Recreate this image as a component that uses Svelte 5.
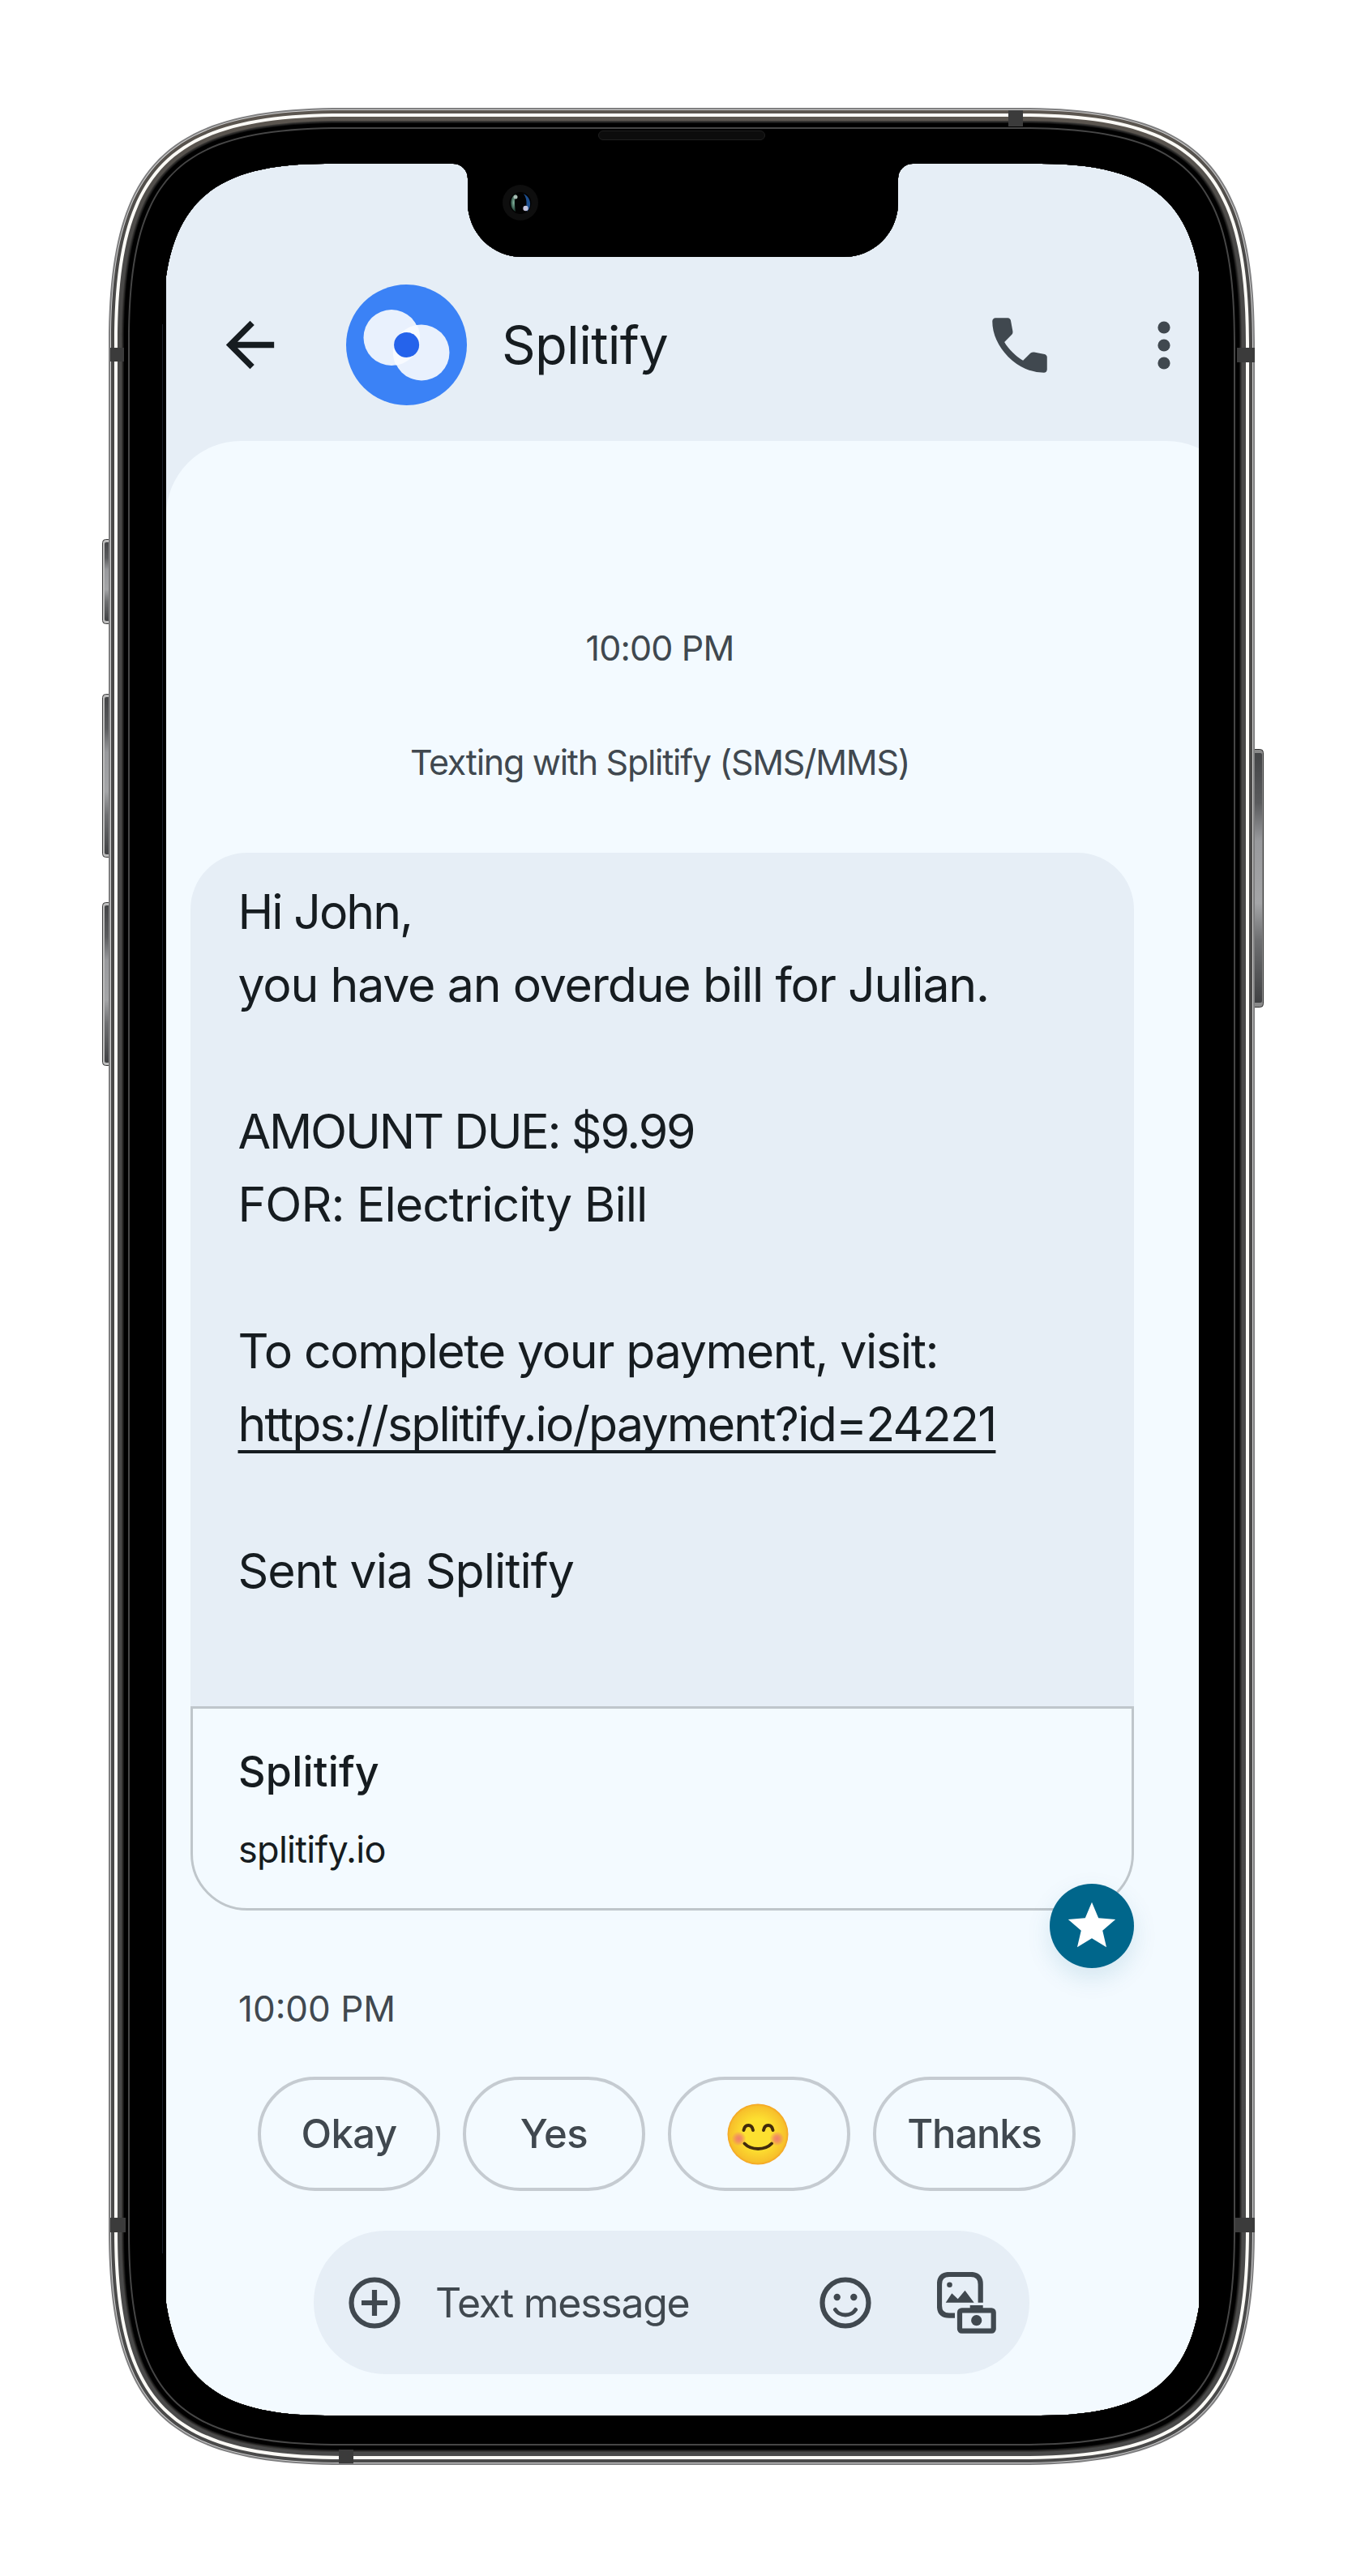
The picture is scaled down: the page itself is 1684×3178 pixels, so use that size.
<script>
  // Message lines; track is the letter spacing in px.
  const body = [
    { text: 'Hi John,', track: -2 },
    { text: 'you have an overdue bill for Julian.', track: -1.2 },
    { text: '', track: 0 },
    { text: 'AMOUNT DUE: $9.99', track: -2.2 },
    { text: 'FOR: Electricity Bill', track: -1 },
    { text: '', track: 0 },
    { text: 'To complete your payment, visit:', track: -1.35 },
    { text: 'https://splitify.io/payment?id=24221', track: -1.8, link: true },
    { text: '', track: 0 },
    { text: 'Sent via Splitify', track: -1 }
  ];

  // Outline of the body, inset by d, with continuous (squircle-like) corners.
  function ring(d) {
    const l = 134 + d, t = 133 + d, r = 1548 - d, b = 3041 - d;
    const e = 290 - d, k = 70 - 0.448 * d;
    return `M${l + e} ${t}H${r - e}C${r - k} ${t} ${r} ${t + k} ${r} ${t + e}V${b - e}` +
      `C${r} ${b - k} ${r - k} ${b} ${r - e} ${b}H${l + e}C${l + k} ${b} ${l} ${b - k} ${l} ${b - e}` +
      `V${t + e}C${l} ${t + k} ${l + k} ${t} ${l + e} ${t}Z`;
  }

  // Opening for the display: squircle corners, sides cropped by the bezel, notch cut in.
  const display =
    'M401 202H559A18 18 0 0 1 577 220V250A67 67 0 0 0 644 317H1041A67 67 0 0 0 1108 250V220A18 18 0 0 1 1126 202' +
    'H1284C1430 202 1484 256 1484 402V2780C1484 2926 1430 2980 1284 2980H401C255 2980 201 2926 201 2780V402C201 256 255 202 401 202Z';

  const hole = ' ' + display;
  const layers = [
    [0, '#7f7f80'], [2, '#d0d0d0'], [3, 'url(#metal)'], [7, '#fbfaf6'], [11, 'url(#metal)'],
    [16, '#3a3937'], [17, '#282726'], [18, '#141414'], [19, '#000'], [24, '#464646'], [26, '#000']
  ];
</script>

<div class="stage">
  <div class="screen">
    <header>
      <svg class="back" viewBox="0 0 24 24"><path d="M20 11H7.83l5.59-5.59L12 4l-8 8 8 8 1.41-1.41L7.83 13H20z" /></svg>
      <svg class="avatar" viewBox="0 0 149 149">
        <circle cx="74.5" cy="74.5" r="74.5" fill="#3b82f6" />
        <circle cx="56" cy="65.5" r="34.5" fill="#e9f1fd" />
        <circle cx="93" cy="84" r="34.5" fill="#e9f1fd" />
        <path d="M61.5 99.5A34.5 34.5 0 0 1 87.5 50A34.5 34.5 0 0 1 61.5 99.5Z" fill="#f8fbff" />
        <circle cx="74.6" cy="74.5" r="15.5" fill="#2563eb" />
      </svg>
      <h1>Splitify</h1>
      <svg class="call" viewBox="0 0 24 24"><path d="M19.95 21q-3.125 0-6.175-1.363t-5.55-3.862-3.862-5.55T3 4.05q0-.45.3-.75t.75-.3H8.1q.35 0 .625.238t.325.562l.65 3.5q.05.4-.025.675T9.4 8.45L6.975 10.9q.5.925 1.187 1.787t1.513 1.663q.775.775 1.625 1.438T13.1 17l2.35-2.35q.225-.225.588-.338t.712-.062l3.45.7q.35.1.575.363T21 15.9v4.05q0 .45-.3.75t-.75.3" /></svg>
      <svg class="more" viewBox="0 0 16 60"><circle cx="8" cy="8" r="7.6" /><circle cx="8" cy="30" r="7.6" /><circle cx="8" cy="52" r="7.6" /></svg>
    </header>

    <main>
      <p class="note time">10:00 PM</p>
      <p class="note via">Texting with Splitify (SMS/MMS)</p>

      <article>
        <div class="bubble">
          {#each body as line}
            <p style:letter-spacing="{line.track}px"><span class:link={line.link}>{line.text}</span></p>
          {/each}
        </div>
        <div class="card">
          <h2>Splitify</h2>
          <p>splitify.io</p>
        </div>
        <span class="badge">
          <svg viewBox="0 0 24 24"><path d="M12 17.27 18.18 21l-1.64-7.03L22 9.24l-7.19-.61L12 2 9.19 8.63 2 9.24l5.46 4.73L5.82 21z" /></svg>
        </span>
      </article>
      <p class="sent">10:00 PM</p>

      <div class="chips">
        <button>Okay</button>
        <button>Yes</button>
        <button aria-label="Smile">
          <svg class="emoji" viewBox="0 0 76 76">
            <defs>
              <radialGradient id="face" cx=".5" cy=".5" r=".5">
                <stop offset=".5" stop-color="#fde030" /><stop offset=".92" stop-color="#f7c02b" /><stop offset="1" stop-color="#f4a223" />
              </radialGradient>
              <radialGradient id="blush"><stop offset="0" stop-color="#ed7770" stop-opacity=".9" /><stop offset=".4" stop-color="#ed7770" stop-opacity=".7" /><stop offset="1" stop-color="#ed7770" stop-opacity="0" /></radialGradient>
            </defs>
            <circle cx="38" cy="38" r="37.5" fill="url(#face)" />
            <circle cx="14.5" cy="43.5" r="9" fill="url(#blush)" />
            <circle cx="61.5" cy="43.5" r="9" fill="url(#blush)" />
            <g fill="none" stroke="#422b0d" stroke-width="4" stroke-linecap="round">
              <path d="M20.5 33C22 25 30.500 25 32 33M45 33C46.500 25 55 25 56.500 33" />
              <path d="M21.500 49.500C29.500 58 47 58 55 49.500" />
            </g>
          </svg>
        </button>
        <button class="wide">Thanks</button>
      </div>

      <div class="composer">
        <svg class="add" viewBox="0 0 64 64"><circle cx="32" cy="32" r="28.500" /><path d="M32 16V48M16 32H48" /></svg>
        <span class="hint">Text message</span>
        <svg class="smile" viewBox="0 0 64 64"><circle cx="32" cy="32" r="28.500" /><path class="mouth" d="M19.500 40.500C25 49 39 49 44.500 40.500" /><g class="solid"><circle cx="21.700" cy="25" r="4.200" /><circle cx="42.300" cy="25" r="4.200" /></g></svg>
        <svg class="media" viewBox="0 0 74 76">
          <path d="M53.700 37.700V15Q53.700 3 41.700 3H15Q3 3 3 15V41.700Q3 53.700 15 53.700H22" />
          <g class="solid"><circle cx="15.500" cy="15.700" r="3.300" /><path d="M10.700 37.700 18.300 26.300 25.700 33.300 34.500 22.700 45.700 37.700ZM40.700 41H56.700V48H40.700Z" /><circle cx="48.700" cy="59.700" r="6.600" /></g>
          <rect x="28" y="47.300" width="41.700" height="25.400" rx="2.500" />
        </svg>
      </div>
    </main>
  </div>

  <svg class="frame" viewBox="0 0 1684 3178">
    <defs>
      <linearGradient id="metal" x1="0" y1="133" x2="0" y2="3041" gradientUnits="userSpaceOnUse">
        <stop offset="0" stop-color="#5d5750" /><stop offset=".06" stop-color="#4a4948" /><stop offset="1" stop-color="#4a4a4a" />
      </linearGradient>
      <linearGradient id="key" x1="0" y1="0" x2="0" y2="1">
        <stop offset="0" stop-color="#444547" /><stop offset=".2" stop-color="#5a5b5d" /><stop offset=".35" stop-color="#98999c" /><stop offset=".6" stop-color="#a4a5a7" /><stop offset=".75" stop-color="#6e6f71" /><stop offset="1" stop-color="#404143" />
      </linearGradient>
      <radialGradient id="green"><stop offset="0" stop-color="#7fb09a" /><stop offset="1" stop-color="#1d3a30" /></radialGradient>
    </defs>
    {#each [[665, 105], [856, 202], [1113, 202]] as [y, h]}
      <rect x="126.500" y={y + 0.5} width="14" height={h - 1} rx="4" fill="#bdbdbd" stroke="#3c3c3c" />
      <rect x="129" y={y + 4} width="8" height={h - 8} rx="2" fill="url(#key)" />
    {/each}
    <rect x="1540" y="924.500" width="18.500" height="318" rx="4" fill="#8a8a8a" stroke="#333" />
    <rect x="1540" y="929" width="17" height="308" rx="2" fill="url(#key)" />
    {#each layers as [d, fill]}
      <path d={ring(d) + hole} {fill} fill-rule="evenodd" />
    {/each}
    <path d="M200 333H205V2850H200ZM1479 320H1485V2860H1479Z" fill="#000" />
    <path d="M200.500 400V2780" stroke="#1b202b" />
    <g fill="#3b3b3b">
      <rect x="1244" y="136" width="18" height="20" /><rect x="418" y="3022" width="18" height="17" />
      <rect x="136" y="429" width="17" height="17" /><rect x="1526" y="429" width="22" height="18" />
      <rect x="136" y="2736" width="19" height="18" /><rect x="1524" y="2736" width="24" height="18" />
    </g>
    <rect x="738.500" y="161.500" width="205" height="11" rx="5.500" fill="#0c0c0c" stroke="#1f1f1f" />
    <circle cx="642" cy="250" r="22" fill="#0e0e0e" />
    <circle cx="642" cy="250.500" r="13.500" fill="#020202" />
    <path d="M637 239C628 243 628 257 636 261C635 254 634 246 637 239Z" fill="url(#green)" />
    <path d="M646 239C656 244 656 256 650 261C648 254 652 248 646 239Z" fill="#1d4f8f" />
    <circle cx="636" cy="243" r="2.500" fill="#a9bdb4" />
    <circle cx="648.500" cy="257" r="3.200" fill="#c3c3dc" />
  </svg>
</div>

<style>
  :global(body) { margin: 0; background: #fff; }
  .stage { position: relative; box-sizing: border-box; width: 1684px; height: 3178px; padding: 202px 205px; background: #fff; font-family: Inter, "Open Sans", sans-serif; color: #161c20; }
  .frame { position: absolute; inset: 0; width: 1684px; height: 3178px; }
  .screen { display: flex; flex-direction: column; width: 1274px; height: 2778px; overflow: hidden; background: #e6eef6; }
  h1, h2, p { margin: 0; font-weight: 400; white-space: pre; }

  header { display: flex; align-items: center; box-sizing: border-box; height: 342px; padding: 149px 35px 44px 59px; fill: #40484f; }
  .back { width: 89px; height: 89px; fill: #161c20; }
  .avatar { width: 149px; height: 149px; margin: 0 43px 0 74px; }
  h1 { font-size: 65px; line-height: 90px; letter-spacing: -.7px; }
  .call { width: 90px; height: 90px; margin: 0 125px 0 auto; }
  .more { width: 16px; height: 60px; }

  main { flex: 1; width: 1326px; box-sizing: border-box; padding: 225px 0 0 30px; border-radius: 92px 92px 0 0; background: #f3faff; }
  .note { width: 1158px; font-size: 43px; line-height: 60px; text-align: center; color: #40484f; }
  .time { letter-spacing: -.85px; }
  .via { margin-top: 81px; letter-spacing: -1.28px; }
  article { position: relative; width: 1164px; margin-top: 82px; }
  .bubble { padding: 27.500px 0 122.500px 58.500px; border-radius: 70px 70px 0 0; background: #e6eef6; font-size: 59px; line-height: 90.350px; }
  .bubble p { height: 90.350px; }
  .link { text-decoration: underline; text-decoration-thickness: 4px; text-underline-offset: 11px; text-decoration-skip-ink: none; }
  .card { box-sizing: border-box; height: 252px; padding: 48px 56px; border: 3px solid #bfc6cb; border-radius: 0 0 70px 70px; line-height: 60px; }
  h2 { font-size: 52px; font-weight: 500; letter-spacing: .2px; }
  .card p { margin-top: 36px; font-size: 45px; letter-spacing: -.7px; }
  .badge { position: absolute; right: 0; bottom: -71px; display: grid; place-items: center; width: 104px; height: 104px; border-radius: 50%; background: #00668b; box-shadow: 0 12px 30px rgba(0, 102, 139, .13); }
  .badge svg { width: 70px; fill: #fff; }
  .sent { margin: 91px 0 0 59px; font-size: 44px; line-height: 60px; color: #40484f; }

  .chips { display: flex; gap: 28px; margin: 54px 0 0 83px; }
  button { display: grid; place-items: center; box-sizing: border-box; width: 225px; height: 141px; padding: 0; border: 4px solid #c5cbd1; border-radius: 71px; background: none; font: 500 49px/60px Inter, "Open Sans", sans-serif; letter-spacing: -.5px; color: #40484f; }
  .wide { width: 250px; letter-spacing: -1.2px; }
  .emoji { width: 76px; height: 76px; margin-right: 4px; }

  .composer { display: flex; align-items: center; box-sizing: border-box; width: 883px; height: 177px; margin: 49px 0 0 152px; padding: 0 40px 0 43px; border-radius: 89px; background: #e6eef6; color: #40484f; }
  .composer svg { fill: none; stroke: #40484f; stroke-width: 6.200px; }
  .add, .smile { width: 64px; height: 64px; }
  .hint { margin-left: 43px; font-size: 50px; line-height: 60px; letter-spacing: -1.270px; }
  .smile { margin-left: auto; margin-right: 81.500px; }
  .composer .mouth { stroke-width: 5px; stroke-linecap: round; }
  .composer .solid { fill: #40484f; stroke: none; }
  .media { width: 74px; height: 76px; }
</style>
